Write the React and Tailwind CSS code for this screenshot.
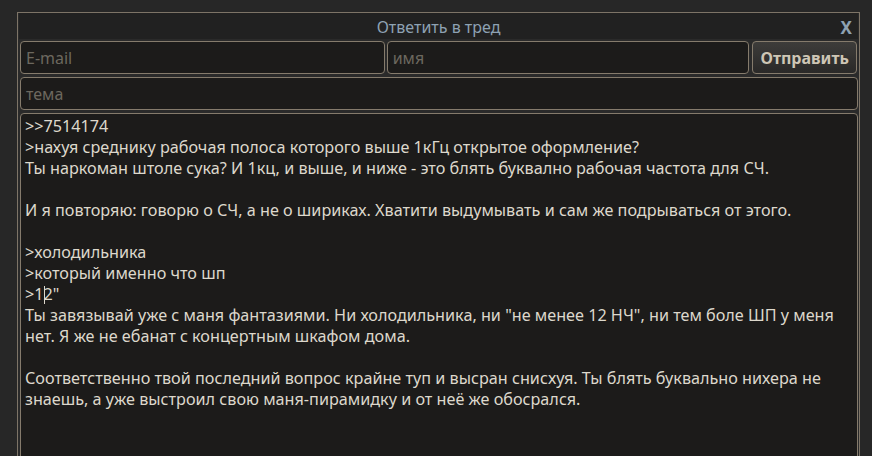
const LINES = [
  '>>7514174',
  '>нахуя среднику рабочая полоса которого выше 1кГц открытое оформление?',
  'Ты наркоман штоле сука? И 1кц, и выше, и ниже - это блять буквално рабочая частота для СЧ.',
  '',
  'И я повторяю: говорю о СЧ, а не о шириках. Хватити выдумывать и сам же подрываться от этого.',
  '',
  '>холодильника',
  '>который именно что шп',
  'CARET',
  'Ты завязывай уже с маня фантазиями. Ни холодильника, ни "не менее 12 НЧ", ни тем боле ШП у меня',
  'нет. Я же не ебанат с концертным шкафом дома.',
  '',
  'Соответственно твой последний вопрос крайне туп и высран снисхуя. Ты блять буквально нихера не',
  'знаешь, а уже выстроил свою маня-пирамидку и от неё же обосрался.',
]

function Field({ placeholder, className = '' }) {
  return (
    <div
      className={`h-[33px] flex items-center px-[5px] rounded-[4px] border border-[#857b6c] bg-[#1c1b1a] text-[16px] text-[#6c685f] ${className}`}
    >
      {placeholder}
    </div>
  )
}

export default function App() {
  return (
    <div
      className="h-[456px] w-[872px] overflow-hidden bg-[#272727] pt-[12px] pl-[17px]"
      style={{ fontFamily: '"Noto Sans", "Open Sans", sans-serif' }}
    >
      <div className="w-[843px] h-[460px] border border-[#7d7467] bg-[#2a2a2a] flex flex-col">
        {/* Header */}
        <div className="relative h-[28px] mx-[1px] pt-[2px] bg-[#212121] flex items-center justify-center">
          <span className="text-[16px] text-[#8ea2b3]">Ответить в тред</span>
          <span className="absolute right-[6px] top-[2px] text-[17px] font-bold text-[#8ea2b3]">X</span>
        </div>

        <div className="flex flex-col gap-[2px] px-[2px] pt-[2px]">
          {/* Email / name / submit */}
          <div className="flex gap-[2px]">
            <Field placeholder="E-mail" className="w-[366px]" />
            <Field placeholder="имя" className="w-[364px]" />
            <button className="ml-[1px] w-[105px] h-[33px] rounded-[4px] border border-[#857b6c] bg-gradient-to-b from-[#3d3c3a] to-[#2a2928] text-[16px] font-bold text-[#cec6b5]">
              Отправить
            </button>
          </div>

          <Field placeholder="тема" className="w-[838px] mt-[1px]" />

          {/* Comment */}
          <div className="mt-[1px] w-[838px] h-[360px] rounded-[4px] border border-[#857b6c] bg-[#1c1b1a] pl-[4px] pt-[2px] text-[16.2px] leading-[21px] text-[#ddd8cc] whitespace-pre">
            {LINES.map((l, i) => (
              <div key={i} className="h-[21px]">
                {l === 'CARET' ? (
                  <>
                    {'>1'}
                    <span className="inline-block w-[1px] h-[18px] -mr-[1px] align-[-4px] bg-[#ddd8cc]" />
                    {'2"'}
                  </>
                ) : (
                  l
                )}
              </div>
            ))}
          </div>
        </div>
      </div>
    </div>
  )
}
